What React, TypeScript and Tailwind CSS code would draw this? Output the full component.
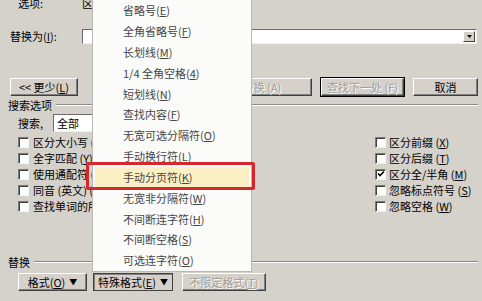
import React from "react";

const F = { fontFamily: '"Noto Sans CJK SC", "Noto Sans", sans-serif' };

function Btn({ children, w, disabled, def, pressed }: { children: React.ReactNode; w: number; disabled?: boolean; def?: boolean; pressed?: boolean }) {
  const base = "h-[18px] flex items-center justify-center text-[11px] leading-none bg-[#d5d1ca] box-border whitespace-nowrap";
  const raised = "border border-t-white border-l-white border-r-[#404040] border-b-[#404040] shadow-[inset_-1px_-1px_0_#808080]";
  const defCls = "outline outline-1 outline-black";
  const pressedCls = "border border-[#404040] shadow-[inset_1px_1px_0_#808080] bg-[#cfcbc4]";
  return (
    <div
      className={`${base} ${pressed ? pressedCls : raised} ${def ? defCls : ""} ${disabled ? "text-[#a09d98] [text-shadow:1px_1px_0_#ffffff]" : "text-black"}`}
      style={{ width: w }}
    >
      {children}
    </div>
  );
}

function Cb({ checked }: { checked?: boolean }) {
  return (
    <div className="w-[11px] h-[11px] bg-white border border-t-[#7a7a7a] border-l-[#7a7a7a] border-r-[#f4f4f4] border-b-[#f4f4f4] shadow-[inset_1px_1px_0_#404040] flex items-center justify-center shrink-0">
      {checked && (
        <svg width="8" height="8" viewBox="0 0 8 8">
          <path d="M1 3.5 L3 5.5 L7 1.5" stroke="#000" strokeWidth="1.6" fill="none" />
        </svg>
      )}
    </div>
  );
}

function U({ c }: { c: string }) {
  return <span className="underline">{c}</span>;
}

const menuItems: [string, string, string][] = [
  ["省略号(", "E", ")"],
  ["全角省略号(", "F", ")"],
  ["长划线(", "M", ")"],
  ["1/4 全角空格(", "4", ")"],
  ["短划线(", "N", ")"],
  ["查找内容(", "F", ")"],
  ["无宽可选分隔符(", "O", ")"],
  ["手动换行符(", "L", ")"],
  ["手动分页符(", "K", ")"],
  ["无宽非分隔符(", "W", ")"],
  ["不间断连字符(", "H", ")"],
  ["不间断空格(", "S", ")"],
  ["可选连字符(", "O", ")"],
];

const leftChecks: [string, string, string][] = [
  ["区分大小写 (", "H", ")"],
  ["全字匹配 (", "Y", ")"],
  ["使用通配符 (", "U", ")"],
  ["同音 (英文) (", "K", ")"],
  ["查找单词的所有形式 (英文) (", "W", ")"],
];

const rightChecks: [string, string, string, boolean][] = [
  ["区分前缀 (", "X", ")", false],
  ["区分后缀 (", "T", ")", false],
  ["区分全/半角 (", "M", ")", true],
  ["忽略标点符号 (", "S", ")", false],
  ["忽略空格 (", "W", ")", false],
];

export default function App() {
  return (
    <div className="relative w-[482px] h-[301px] overflow-hidden bg-[#d5d2cb] text-[11px] text-black" style={F}>
      <div className="flex flex-col">
        {/* Row A */}
        <div className="h-[12px] -mt-[3px] flex items-center leading-[12px]">
          <span className="ml-[18px] w-[64px]">选项:</span>
          <span className="w-[10px] overflow-hidden whitespace-nowrap">区分全/半角</span>
        </div>
        {/* Row B */}
        <div className="mt-[20px] h-[15px] flex items-center">
          <span className="ml-[10px] w-[72px]">
            替换为(<U c="I" />):
          </span>
          <div className="w-[395px] h-[15px] bg-white border border-t-[#6a6a6a] border-l-[#6a6a6a] border-r-[#f0f0f0] border-b-[#f0f0f0] flex items-center justify-end pr-[1px]">
            <div className="w-[12px] h-[11px] bg-[#d5d1ca] border border-t-white border-l-white border-r-[#404040] border-b-[#404040] flex items-center justify-center">
              <svg width="5" height="3" viewBox="0 0 5 3">
                <path d="M0 0 H5 L2.5 3 Z" fill="#000" />
              </svg>
            </div>
          </div>
        </div>
        {/* Row C buttons */}
        <div className="mt-[34px] flex items-center">
          <div className="ml-[10px]">
            <Btn w={68}>
              &lt;&lt; 更少(<U c="L" />)
            </Btn>
          </div>
          <div className="ml-[112px]">
            <Btn w={122} disabled>
              全部替换 (A)
            </Btn>
          </div>
          <div className="ml-[9px]">
            <Btn w={83} disabled def>
              查找下一处 (F)
            </Btn>
          </div>
          <div className="ml-[9px]">
            <Btn w={65}>取消</Btn>
          </div>
        </div>
        {/* Row D group label */}
        <div className="mt-[3px] h-[12px] flex items-center">
          <span className="ml-[8px] mr-[4px]">搜索选项</span>
          <div className="flex-1 mr-[4px] h-[2px] border-t border-t-[#8c8a86] border-b border-b-white" />
        </div>
        {/* Row E search */}
        <div className="mt-[3px] h-[18px] flex items-center">
          <span className="ml-[18px] w-[35px]">
            搜索<U c="," />
          </span>
          <div className="w-[80px] h-[18px] bg-white border border-t-[#6a6a6a] border-l-[#6a6a6a] border-r-[#f0f0f0] border-b-[#f0f0f0] flex items-center pl-[3px]">
            全部
          </div>
        </div>
        {/* Checkbox rows */}
        <div className="mt-[2px] flex">
          <div className="w-[375px] pl-[18px] flex flex-col">
            {leftChecks.map((c, i) => (
              <div key={i} className="h-[16px] flex items-center gap-[4px] whitespace-nowrap">
                <Cb />
                <span className="w-[60px] overflow-hidden">
                  {c[0]}
                  <U c={c[1]} />
                  {c[2]}
                </span>
              </div>
            ))}
          </div>
          <div className="flex flex-col">
            {rightChecks.map((c, i) => (
              <div key={i} className="h-[16px] flex items-center gap-[3px] whitespace-nowrap">
                <Cb checked={c[3]} />
                <span>
                  {c[0]}
                  <U c={c[1]} />
                  {c[2]}
                </span>
              </div>
            ))}
          </div>
        </div>
        {/* Row F 替换 */}
        <div className="mt-[42px] h-[12px] flex items-center">
          <span className="ml-[8px] mr-[4px]">替换</span>
          <div className="flex-1 mr-[4px] h-[2px] border-t border-t-[#8c8a86] border-b border-b-white" />
        </div>
        {/* Row G bottom buttons */}
        <div className="mt-[5px] flex items-center">
          <div className="ml-[18px]">
            <Btn w={69}>
              格式(<U c="O" />) <span className="ml-[4px] text-[8px]">▼</span>
            </Btn>
          </div>
          <div className="ml-[6px]">
            <Btn w={80} pressed>
              特殊格式(<U c="E" />) <span className="ml-[4px] text-[8px]">▼</span>
            </Btn>
          </div>
          <div className="ml-[9px]">
            <Btn w={84} disabled>
              不限定格式(<U c="T" />)
            </Btn>
          </div>
        </div>
      </div>

      {/* Dropdown menu */}
      <div className="absolute left-[92px] top-0 w-[160px] h-[272px] bg-[#fbfbfa] border border-t-0 border-[#b9b8b5] flex flex-col">
        {menuItems.map((m, i) => (
          <div
            key={i}
            className={`h-[21px] flex items-center text-[11px] text-[#454545] whitespace-nowrap ${
              i === 8 ? "mx-[2px] pl-[28px] bg-[#fcefc4]" : "pl-[30px]"
            }`}
          >
            {m[0]}
            <U c={m[1]} />
            {m[2]}
          </div>
        ))}
      </div>

      {/* Red highlight box */}
      <div className="absolute left-[86px] top-[162px] w-[169px] h-[28px] border-[3px] border-[#d4282c] rounded-[2px]" />
    </div>
  );
}
